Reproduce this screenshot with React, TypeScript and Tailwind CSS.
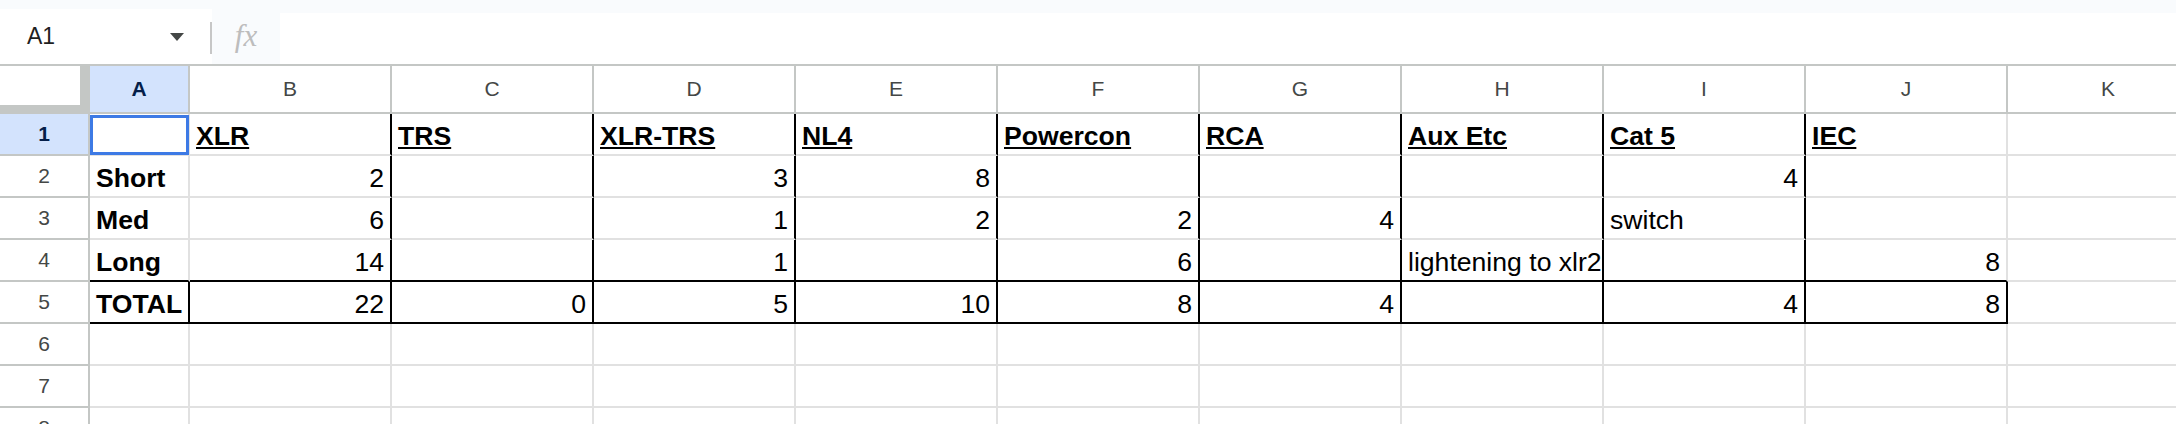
const COLS = ["A", "B", "C", "D", "E", "F", "G", "H", "I", "J", "K"];

type Val = string | number | null;

const rows: Val[][] = [
  [null, "XLR", "TRS", "XLR-TRS", "NL4", "Powercon", "RCA", "Aux Etc", "Cat 5", "IEC"],
  ["Short", 2, null, 3, 8, null, null, null, 4, null],
  ["Med", 6, null, 1, 2, 2, 4, null, "switch", null],
  ["Long", 14, null, 1, null, 6, null, "lightening to xlr2", null, 8],
  ["TOTAL", 22, 0, 5, 10, 8, 4, null, 4, 8],
  [],
  [],
  [],
];

function Cell({ r, c, value }: { r: number; c: number; value: Val }) {
  const blackRight = (c >= 1 && c <= 8 && r <= 5) || (r === 5 && (c === 0 || c === 9));
  const blackBottom = (r === 4 || r === 5) && c <= 9;
  const width = c === 0 ? "w-[100px]" : "w-[202px]";
  const right = blackRight ? "border-r-black" : "border-r-[#e1e1e1]";
  const bottom = blackBottom ? "border-b-black" : "border-b-[#e1e1e1]";
  const isNum = typeof value === "number";
  const bold = c === 0 || r === 1;
  const head = r === 1 && c >= 1;

  return (
    <div
      className={`relative shrink-0 h-[42px] border-r-2 border-b-2 ${width} ${right} ${bottom} flex items-end px-[6px] pb-[3px] ${
        isNum ? "justify-end" : "justify-start"
      }`}
    >
      {value !== null && value !== undefined && (
        <span
          className={`whitespace-nowrap text-[26.6px] leading-[30px] text-black ${bold ? "font-bold" : ""} ${
            head ? "underline" : ""
          }`}
        >
          {value}
        </span>
      )}
      {r === 1 && c === 0 && (
        <div className="absolute left-0 top-[1px] w-[99px] h-[40px] border-[3px] border-[#3d7ae5]" />
      )}
    </div>
  );
}

export default function App() {
  return (
    <div className="w-[2176px] h-[424px] overflow-hidden bg-white font-['Liberation_Sans',Arial,sans-serif]">
      {/* formula bar */}
      <div className="flex h-[64px] bg-[#f9fbfd]">
        <div className="mt-[9px] flex w-[212px] items-center bg-white">
          <div className="flex w-[210px] items-center justify-between pl-[27px] pr-[26px]">
            <span className="text-[23px] text-[#1f1f1f]">A1</span>
            <div className="h-0 w-0 border-x-[7px] border-t-[8px] border-x-transparent border-t-[#444746]" />
          </div>
          <div className="mt-[3px] h-[32px] w-[2px] bg-[#c7c7c7]" />
        </div>
        <div className="flex w-[68px] items-center justify-center pt-[8px]">
          <span className="font-['Liberation_Serif',serif] text-[31px] italic text-[#bdbdbd]">fx</span>
        </div>
        <div className="mt-[13px] flex-1 bg-white" />
      </div>

      {/* column headers */}
      <div className="flex h-[50px] border-y-2 border-[#c4c7c5]">
        <div className="w-[90px] shrink-0 bg-[#c4c7c5]">
          <div className="h-[39px] w-[80px] bg-white" />
        </div>
        {COLS.map((col, i) => (
          <div
            key={col}
            className={`flex shrink-0 items-center justify-center border-r-2 border-[#c4c7c5] text-[21px] ${
              i === 0
                ? "w-[100px] bg-[#d3e3fd] font-bold text-[#041e49]"
                : "w-[202px] bg-white text-[#444746]"
            }`}
          >
            {col}
          </div>
        ))}
      </div>

      {/* rows */}
      {rows.map((row, ri) => {
        const r = ri + 1;
        return (
          <div key={r} className="flex">
            <div
              className={`flex h-[42px] w-[90px] shrink-0 items-center justify-center border-r-2 border-b-2 border-[#c4c7c5] text-[21px] ${
                r === 1 ? "bg-[#d3e3fd] font-bold text-[#041e49]" : "bg-white text-[#444746]"
              }`}
            >
              {r}
            </div>
            {COLS.map((col, c) => (
              <Cell key={col} r={r} c={c} value={row[c] ?? null} />
            ))}
          </div>
        );
      })}
    </div>
  );
}
